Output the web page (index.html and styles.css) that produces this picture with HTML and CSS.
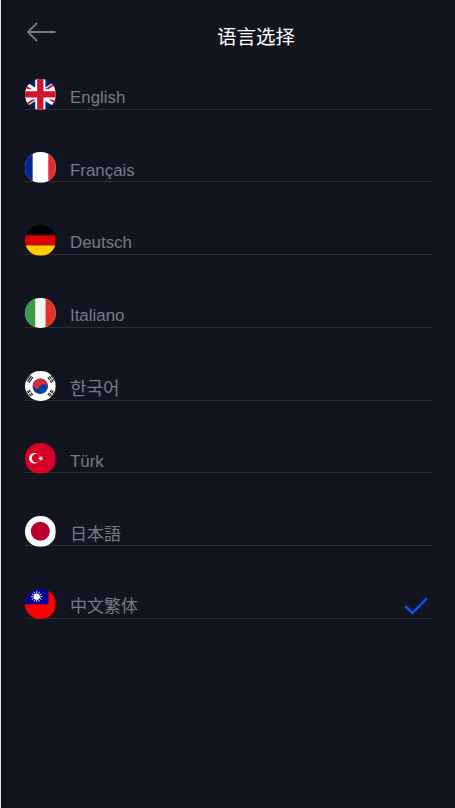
FILE: index.html
```html
<!DOCTYPE html>
<html lang="zh">
<head>
<meta charset="utf-8">
<title>语言选择</title>
<link rel="stylesheet" href="styles.css">
</head>
<body>
<main class="screen">
  <header class="header">
    <svg class="back" viewBox="0 0 30 20"><path d="M28.5 10H1.5M10 1L1 10l9 9"/></svg>
    <h1 class="title">语言选择</h1>
  </header>
  <ul class="languages">
    <li class="language">
      <svg class="flag" viewBox="0 0 30 30"><rect width="30" height="30" fill="#00246b"/><path d="M-9 0L39 30M-9 30L39 0" stroke="#fff" stroke-width="6"/><path d="M-9 1.200L15 16.200M39 28.800L15 13.800M-9 31.200L15 16.200M39 -1.200L15 13.800" stroke="#cf142b" stroke-width="2"/><path d="M15 0v30M0 15h30" stroke="#fff" stroke-width="10"/><path d="M15 0v30M0 15h30" stroke="#cf142b" stroke-width="6.200"/></svg>
      <span class="name">English</span>
    </li>
    <li class="language">
      <svg class="flag" viewBox="0 0 30 30"><rect width="30" height="30" fill="#fff"/><rect width="7.5" height="30" fill="#002395"/><rect x="22.8" width="7.2" height="30" fill="#ed2939"/></svg>
      <span class="name">Français</span>
    </li>
    <li class="language">
      <svg class="flag" viewBox="0 0 30 30"><rect width="30" height="30" fill="#000"/><rect y="10" width="30" height="10" fill="#d00"/><rect y="20" width="30" height="10" fill="#ffce00"/></svg>
      <span class="name">Deutsch</span>
    </li>
    <li class="language">
      <svg class="flag" viewBox="0 0 30 30"><rect width="30" height="30" fill="#f4f5f0"/><rect width="10" height="30" fill="#389b4a"/><rect x="20.2" width="9.8" height="30" fill="#e73127"/></svg>
      <span class="name">Italiano</span>
    </li>
    <li class="language">
      <svg class="flag" viewBox="0 0 30 30"><rect width="30" height="30" fill="#fff"/><g transform="rotate(25 15 15)"><circle cx="15" cy="15" r="7.6" fill="#003f9f"/><path d="M7.4 15a7.6 7.6 0 0 1 15.200 0a3.800 3.800 0 0 0-7.600 0a3.800 3.800 0 0 1-7.600 0" fill="#d02c39"/></g><g stroke="#111" stroke-width="1.1"><path d="M.8 9.5L4.800 4M2.300 10.5L6.300 5M3.800 11.5L7.800 6"/><path d="M29.200 9.5L25.200 4M27.700 10.5L23.700 5M26.200 11.5L22.200 6" stroke-dasharray="2.8 .8"/><path d="M.8 20.5L4.800 26M2.300 19.5L6.300 25M3.800 18.5L7.800 24" stroke-dasharray="2.8 .8"/><path d="M29.200 20.5L25.200 26M27.700 19.5L23.700 25M26.200 18.5L22.200 24" stroke-dasharray="2.8 .8"/></g></svg>
      <span class="name name-ko" lang="ko">한국어</span>
    </li>
    <li class="language">
      <svg class="flag" viewBox="0 0 30 30"><rect width="30" height="30" fill="#d80027"/><circle cx="9.2" cy="15" r="5.2" fill="#fff"/><circle cx="10.8" cy="15" r="4.1" fill="#d80027"/><path d="M12.5 15l2-.7v-2l1.3 1.6 2-.6-1.2 1.7 1.2 1.7-2-.6-1.3 1.6v-2z" fill="#fff"/></svg>
      <span class="name">Türk</span>
    </li>
    <li class="language">
      <svg class="flag" viewBox="0 0 30 30"><rect width="30" height="30" fill="#fff"/><circle cx="15" cy="15" r="9.3" fill="#bc002d"/></svg>
      <span class="name name-cjk" lang="ja">日本語</span>
    </li>
    <li class="language">
      <svg class="flag" viewBox="0 0 30 30"><rect width="30" height="30" fill="#fe0000"/><rect width="23" height="15" fill="#000095"/><path d="M11.5 2v11M6 7.500h11M8.750 2.740l5.500 9.520M14.250 2.740L8.750 12.260M6.740 4.750l9.520 5.500M16.260 4.750l-9.520 5.500" stroke="#fff" stroke-width=".9"/><circle cx="11.500" cy="7.500" r="3.500" fill="#000095"/><circle cx="11.500" cy="7.500" r="3.100" fill="#fff"/></svg>
      <span class="name name-cjk">中文繁体</span>
      <svg class="check" viewBox="0 0 24 18"><path d="M1.300 9L8.500 16 22.700 1.500"/></svg>
    </li>
  </ul>
</main>
</body>
</html>
```
FILE: styles.css
```css
* { box-sizing: border-box; }
body { margin: 0; background: #12151f; }
.screen {
  min-height: 808px;
  border-left: 1px solid #dce2e7;
  padding: 0 23px 0 24px;
  font-family: "Liberation Sans", "Noto Sans CJK SC", sans-serif;
}
.header {
  display: grid;
  grid-template-columns: 55px 1fr;
  height: 79.4px;
}
.back {
  width: 30px;
  height: 20px;
  margin: 22px 0 0 2px;
  fill: none;
  stroke: #727b8b;
  stroke-width: 1.8;
}
.title {
  margin: 23px 0 0;
  text-align: center;
  font-size: 19.5px;
  font-weight: 400;
  line-height: 28px;
  color: #fff;
}
.languages { margin: 0; padding: 0; list-style: none; }
.language {
  display: flex;
  height: 30.2px;
  margin-bottom: 42.6px;
  border-bottom: 1px solid #2c2d30;
}
.flag {
  flex: none;
  width: 30.6px;
  height: 30.6px;
  border-radius: 50%;
}
.name {
  margin: 8.500px 0 0 14.400px;
  font-size: 16.9px;
  line-height: 20px;
  color: #727b8b;
}
.name-ko { font-family: "Noto Sans CJK KR", sans-serif; font-size: 18px; margin-top: 6px; }
.name-cjk { font-family: "Noto Sans CJK SC", sans-serif; font-size: 17px; margin-top: 6.500px; }
.check {
  width: 24px;
  height: 18px;
  margin: 8px 4px 0 auto;
  fill: none;
  stroke: #0b50ff;
  stroke-width: 2.5;
}
```
